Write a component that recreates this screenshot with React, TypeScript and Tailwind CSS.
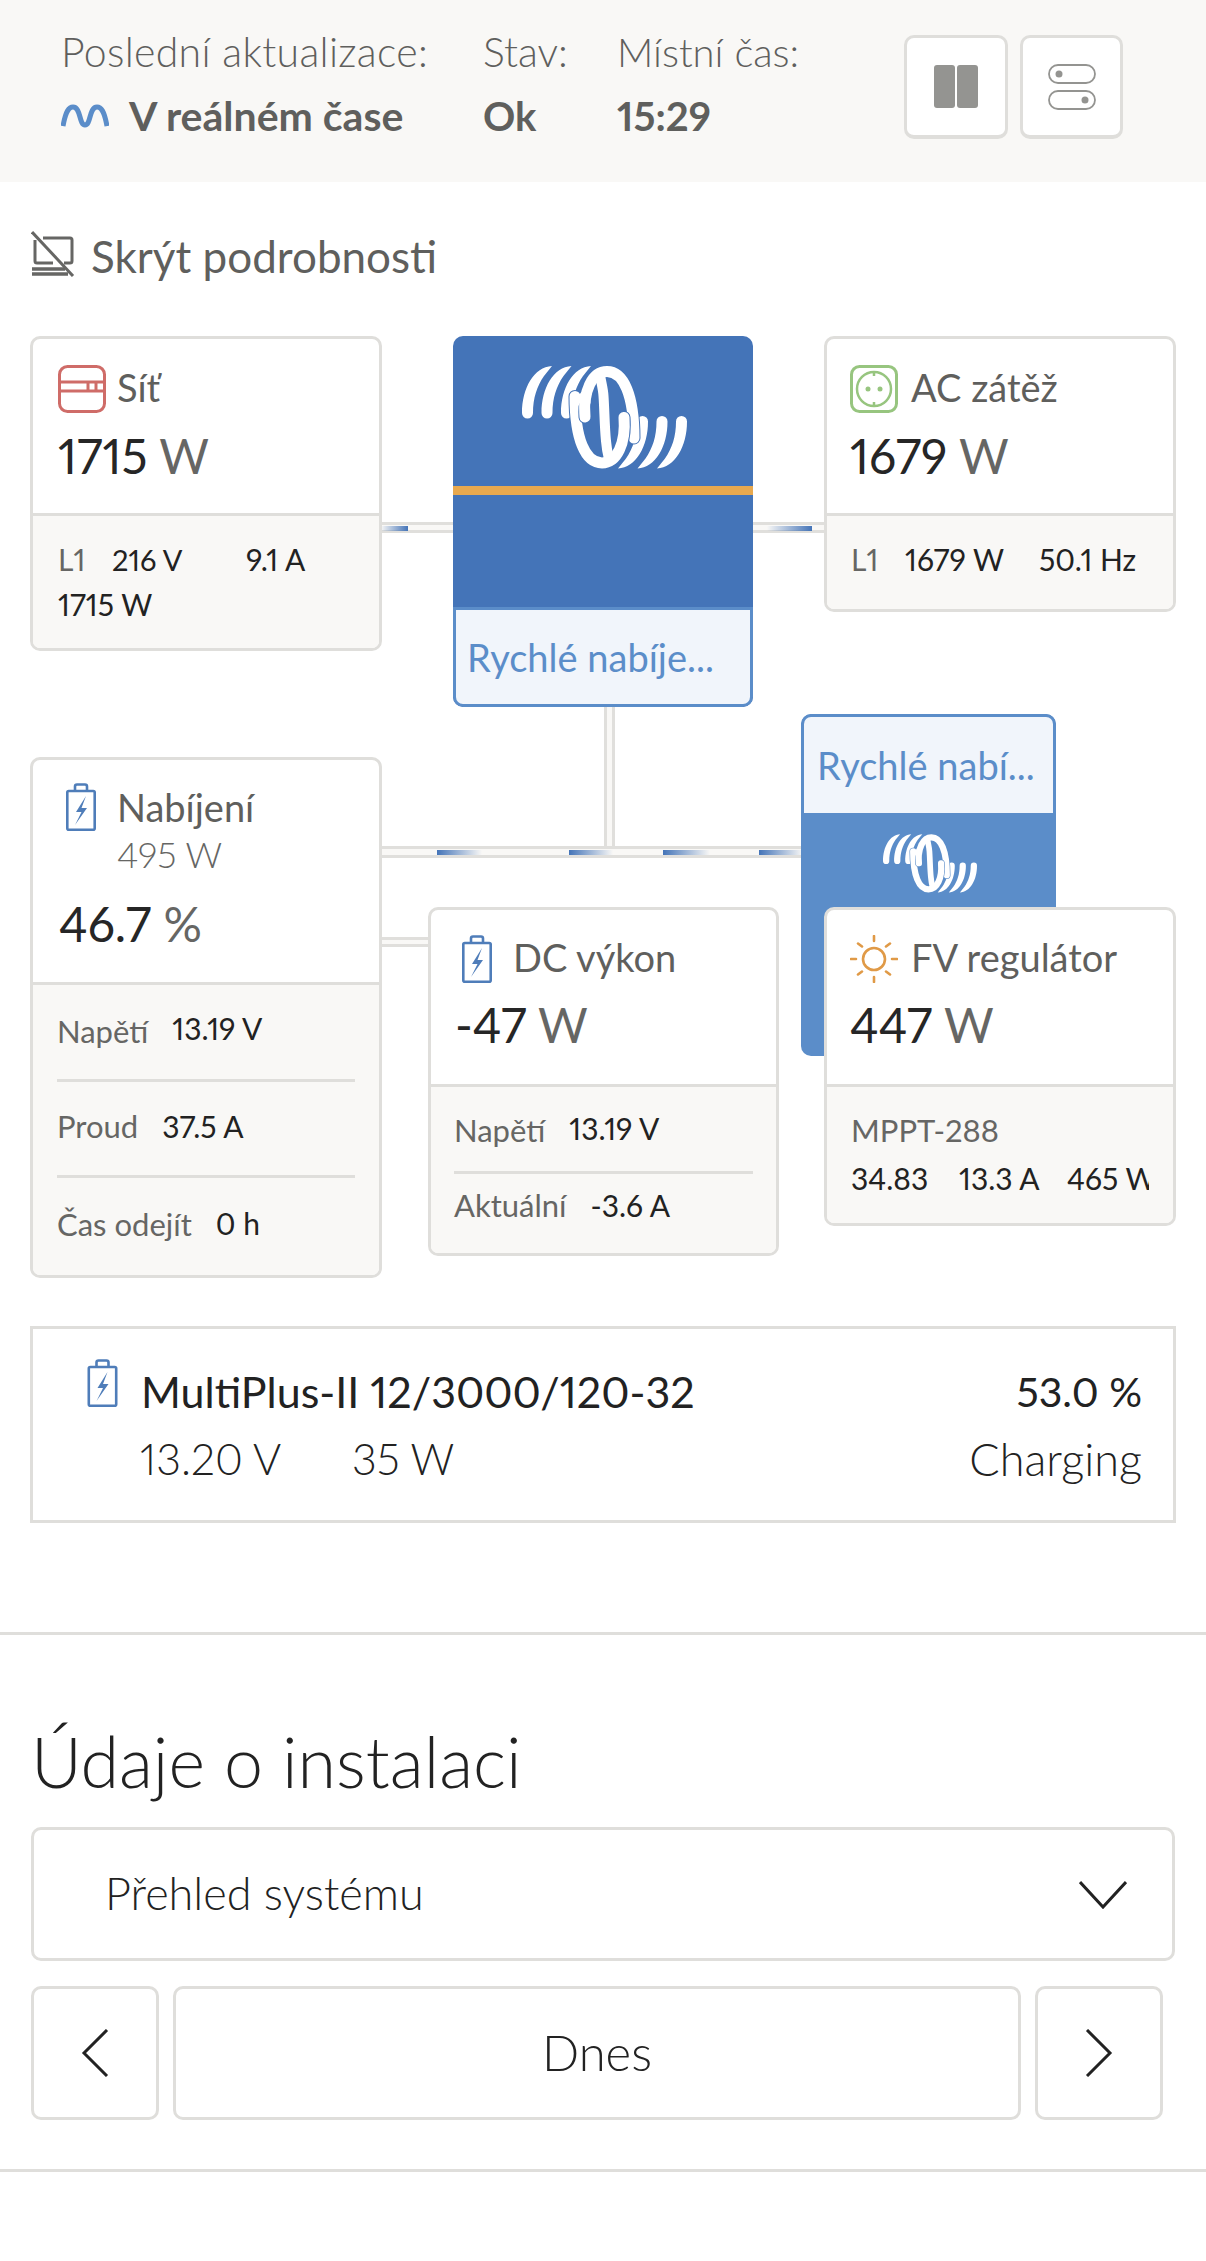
import type { ReactNode } from 'react';

const SANS = "font-['Lato','Noto_Sans',sans-serif]";
const LOOP = 'M63 51C61 25 70 5.500 85 5.500 102 5.500 112 30 112 72';

function Logo({ bg, className }: { bg: string; className: string }) {
  const crescent = (dx: number) => (
    <path
      key={dx}
      transform={`translate(${dx} 0)`}
      d="M0 47C0 22 12 1 30 0L22 10C15 20 11 32 11 47a5.500 5.500 0 0 1-11 0Z"
      fill="white"
    />
  );
  return (
    <svg viewBox="0 0 165 103" className={className}>
      {[0, 19.5, 39].map(crescent)}
      <g transform="rotate(180 82.500 51.200)">{[0, 19.5, 39].map(crescent)}</g>
      <g fill="none" strokeLinecap="round">
        <path d={LOOP} stroke={bg} strokeWidth="13" />
        <path d={LOOP} stroke="white" strokeWidth="11" />
        <g transform="rotate(180 82.500 51.200)">
          <path d={LOOP} stroke={bg} strokeWidth="13" />
          <path d={LOOP} stroke="white" strokeWidth="11" />
        </g>
        <path d="M63 51C62.800 48 62.800 44 63 41" stroke={bg} strokeWidth="13" />
        <path d="M63 51C62.500 45 62.500 38 63 30" stroke="white" strokeWidth="11" />
        <path d="M78 9C79 16 81 22 81.500 30 82.500 44 82.500 60 84 75 84.500 81 85.500 87 87 93" stroke="white" strokeWidth="10" />
      </g>
    </svg>
  );
}

function BatteryIcon({ className }: { className: string }) {
  return (
    <svg viewBox="0 0 30 48" className={className} fill="none" stroke="#4f7db9" strokeWidth="2.600">
      <rect x="1.300" y="8" width="27.400" height="38.700" rx="1.500" />
      <path d="M9 8V3.500a2 2 0 0 1 2-2h8a2 2 0 0 1 2 2V8" />
      <path d="M20 13 10 29h5.500L9 42l12-17h-5.500z" fill="#4f7db9" stroke="none" />
    </svg>
  );
}

function GridIcon() {
  return (
    <svg viewBox="0 0 48 48" className="h-12 w-12 shrink-0" fill="none" stroke="#cf6c68" strokeWidth="3">
      <rect x="1.500" y="1.500" width="45" height="45" rx="8" />
      <path d="M2 17h44M2 26h44M30 17v9M38 17v9" />
    </svg>
  );
}

function SocketIcon() {
  return (
    <svg viewBox="0 0 48 48" className="h-12 w-12 shrink-0" fill="none" stroke="#97c57f" strokeWidth="2.500">
      <rect x="1.500" y="1.500" width="45" height="45" rx="8" strokeWidth="3" />
      <circle cx="24" cy="24" r="17" />
      <path d="M24 6v5M24 37v5" />
      <circle cx="18" cy="24" r="2.500" fill="#97c57f" stroke="none" />
      <circle cx="30" cy="24" r="2.500" fill="#97c57f" stroke="none" />
    </svg>
  );
}

function SunIcon() {
  return (
    <svg viewBox="0 0 48 48" className="h-12 w-12 shrink-0" fill="none" stroke="#e09a47" strokeWidth="2.600">
      <circle cx="24" cy="24" r="11" />
      <path
        d="M24 1v5M24 42v5M1 24h5M42 24h5M8 8.500l4 3M40 8.500l-4 3M8 39.500l4-3M40 39.500l-4-3"
        strokeLinecap="round"
      />
    </svg>
  );
}

function Wire({ className, children }: { className: string; children?: ReactNode }) {
  return <div className={`absolute border-[#e0dfdc] bg-[#f9f8f6] ${className}`}>{children}</div>;
}

function Dash({ className }: { className: string }) {
  return <div className={`absolute top-[1px] h-[5px] from-[#4474b8] to-[#4474b8]/0 ${className}`} />;
}

function Card({ className, children }: { className: string; children: ReactNode }) {
  return (
    <div className={`absolute flex flex-col overflow-hidden rounded-[10px] border-[3px] border-[#dfdedb] bg-white ${className}`}>
      {children}
    </div>
  );
}

function Big({ n, unit }: { n: string; unit: string }) {
  return (
    <div className="-mt-[4px] text-[48px] leading-[56px] text-[#262626]">
      {n} <span className="text-[#666664]">{unit}</span>
    </div>
  );
}

function Title({ children }: { children: ReactNode }) {
  return <span className="pb-[3px] text-[38px] leading-[48px] text-[#5f5f5d]">{children}</span>;
}

function Foot({ className, children }: { className: string; children: ReactNode }) {
  return <div className={`flex-1 border-t-[3px] border-[#dfdedb] bg-[#f9f8f6] text-[30px] text-[#222] ${className}`}>{children}</div>;
}

function Lbl({ children }: { children: ReactNode }) {
  return <span className="text-[#666664]">{children}</span>;
}

function RowLbl({ children }: { children: ReactNode }) {
  return <span className="text-[31px] text-[#666664]">{children}</span>;
}

function Chevron({ d, className }: { d: string; className: string }) {
  return (
    <svg viewBox="0 0 48 48" className={className} fill="none" stroke="#222" strokeWidth="3">
      <path d={d} />
    </svg>
  );
}

export default function App() {
  return (
    <div className={`min-h-[2261px] w-[1206px] overflow-hidden bg-white proportional-nums ${SANS}`}>
      {/* top status bar */}
      <div className="flex h-[182px] items-start bg-[#f9f8f6] pl-[61px] pt-[29px]">
        <div className="w-[422px]">
          <div className="text-[41px] font-light leading-[46px] tracking-[0.3px] text-[#5f5f5d]">Poslední aktualizace:</div>
          <div className="mt-[18px] flex items-center gap-[20px] text-[41px] font-bold leading-[46px] text-[#5f5f5d]">
            <svg viewBox="0 0 48 24" className="h-[24px] w-[48px] shrink-0" fill="none" stroke="#5b8dc9" strokeWidth="5">
              <path d="M2 22C5 6 8 3 12 3 20 3 18 21 24 21 30 21 28 3 36 3 40 3 43 6 46 22" />
            </svg>
            V reálném čase
          </div>
        </div>
        <div className="w-[134px]">
          <div className="text-[41px] font-light leading-[46px] text-[#5f5f5d]">Stav:</div>
          <div className="mt-[18px] text-[40px] font-bold leading-[46px] text-[#5f5f5d]">Ok</div>
        </div>
        <div className="w-[287px]">
          <div className="text-[40px] font-light leading-[46px] text-[#5f5f5d]">Místní čas:</div>
          <div className="mt-[18px] text-[40px] font-bold leading-[46px] text-[#5f5f5d]">15:29</div>
        </div>
        <div className="mt-[6px] flex gap-[12px]">
          <button className="flex h-[104px] w-[104px] items-center justify-center rounded-[10px] border-[3px] border-b-[4px] border-[#dfdedb] bg-white">
            <span className="flex gap-[2px]">
              <span className="h-[43px] w-[21px] rounded-[3px] bg-[#949491]" />
              <span className="h-[43px] w-[21px] rounded-[3px] bg-[#949491]" />
            </span>
          </button>
          <button className="flex h-[104px] w-[103px] items-center justify-center rounded-[10px] border-[3px] border-b-[4px] border-[#dfdedb] bg-white">
            <svg viewBox="0 0 48 46" className="h-[46px] w-[48px]" fill="none" stroke="#949491" strokeWidth="1.800">
              <rect x="1" y="1" width="46" height="18" rx="9" />
              <rect x="1" y="27" width="46" height="18" rx="9" />
              <circle cx="11" cy="10" r="3.500" fill="#949491" stroke="none" />
              <circle cx="37" cy="36" r="3.500" fill="#949491" stroke="none" />
            </svg>
          </button>
        </div>
      </div>

      {/* details toggle */}
      <div className="flex h-[154px] items-start gap-[16px] pl-[31px] pt-[49px]">
        <svg viewBox="0 0 44 46" className="h-[46px] w-[44px] shrink-0" fill="none" stroke="#666664" strokeWidth="3">
          <path d="M12 7h27a2 2 0 0 1 2 2v21a2 2 0 0 1-2 2h-6" />
          <path d="M4 9v21a2 2 0 0 0 2 2h16" />
          <path d="M1 38h33M1 43h36" strokeWidth="3.500" />
          <path d="M1 1l41 44" />
        </svg>
        <span className="text-[44px] leading-[50px] text-[#5f5f5d]">Skrýt podrobnosti</span>
      </div>

      {/* system diagram */}
      <div className="relative h-[990px] w-[1206px]">
        <Wire className="left-[381px] top-[186px] h-[11px] w-[72px] border-y-[3px]">
          <Dash className="left-0 w-[27px] bg-gradient-to-l" />
        </Wire>
        <Wire className="left-[753px] top-[186px] h-[11px] w-[71px] border-y-[3px]">
          <Dash className="left-[14px] w-[45px] bg-gradient-to-l" />
        </Wire>
        <Wire className="left-[604px] top-[371px] h-[140px] w-[11px] border-x-[3px]" />
        <Wire className="left-[381px] top-[510px] h-[12px] w-[422px] border-y-[3px]">
          <Dash className="left-[56px] top-[1.500px] w-[45px] bg-gradient-to-r" />
          <Dash className="left-[188px] top-[1.500px] w-[44px] bg-gradient-to-r" />
          <Dash className="left-[282px] top-[1.500px] w-[47px] bg-gradient-to-r" />
          <Dash className="left-[378px] top-[1.500px] w-[44px] bg-gradient-to-r" />
        </Wire>
        <Wire className="left-[381px] top-[601px] h-[10px] w-[48px] border-y-[3px]" />

        <Card className="left-[30px] top-0 h-[315px] w-[352px]">
          <div className="h-[174px] shrink-0 pl-[25px] pt-[24px]">
            <div className="flex items-center gap-[11px]">
              <GridIcon />
              <Title>Síť</Title>
            </div>
            <div className="mt-[18px]"><Big n="1715" unit="W" /></div>
          </div>
          <Foot className="pl-[25px] pt-[21px] leading-[45px]">
            <div className="flex">
              <span className="w-[54px]"><Lbl>L1</Lbl></span>
              <span className="w-[134px] text-[29px]">216 V</span>
              <span>9.1 A</span>
            </div>
            <div>1715 W</div>
          </Foot>
        </Card>

        <div className="absolute left-[453px] top-0 flex h-[371px] w-[300px] flex-col overflow-hidden rounded-[10px] bg-[#4474b8]">
          <div className="flex h-[150px] shrink-0 justify-center pl-[2px] pt-[30px]">
            <Logo bg="#4474b8" className="h-[103px] w-[165px]" />
          </div>
          <div className="h-[9px] shrink-0 bg-[#e8a94f]" />
          <div className="h-[112px] shrink-0" />
          <div className="flex flex-1 items-center rounded-b-[10px] border-[3px] border-[#5b8dc9] bg-[#f1f5fb] pl-[11px] text-[38px] text-[#5b8dc9]">
            Rychlé nabíje...
          </div>
        </div>

        <Card className="left-[824px] top-0 h-[276px] w-[352px]">
          <div className="h-[174px] shrink-0 pl-[23px] pt-[24px]">
            <div className="flex items-center gap-[13px]">
              <SocketIcon />
              <Title>AC zátěž</Title>
            </div>
            <div className="mt-[18px]"><Big n="1679" unit="W" /></div>
          </div>
          <Foot className="pl-[24px] pt-[21px] leading-[45px]">
            <div className="flex">
              <span className="w-[54px]"><Lbl>L1</Lbl></span>
              <span className="w-[134px]">1679 W</span>
              <span>50.1 Hz</span>
            </div>
          </Foot>
        </Card>

        <Card className="left-[30px] top-[421px] h-[521px] w-[352px]">
          <div className="h-[222px] shrink-0 pl-[26px] pt-[23px]">
            <div className="flex gap-[21px]">
              <BatteryIcon className="ml-[7px] h-[48px] w-[30px] shrink-0" />
              <div className="flex flex-col">
                <Title>Nabíjení</Title>
                <span className="-mt-[3px] text-[36px] font-light leading-[46px] text-[#666664]">495 W</span>
              </div>
            </div>
            <div className="mt-[23px]"><Big n="46.7" unit="%" /></div>
          </div>
          <Foot className="px-[24px]">
            <div className="flex h-[97px] items-center gap-[24px] border-b-[3px] border-[#dfdedb] pb-[1px]"><RowLbl>Napětí</RowLbl><span className="-mt-[6px]">13.19 V</span></div>
            <div className="flex h-[96px] items-center gap-[24px] border-b-[3px] border-[#dfdedb] pb-[4px]"><RowLbl>Proud</RowLbl><span>37.5 A</span></div>
            <div className="flex h-[96px] items-center gap-[24px] pb-[3px]"><RowLbl>Čas odejít</RowLbl><span className="-mt-[2px]">0 h</span></div>
          </Foot>
        </Card>

        <Card className="left-[428px] top-[571px] h-[349px] w-[351px]">
          <div className="h-[174px] shrink-0 pl-[24px] pt-[23px]">
            <div className="flex items-center gap-[21px]">
              <BatteryIcon className="ml-[7px] h-[48px] w-[30px] shrink-0" />
              <Title>DC výkon</Title>
            </div>
            <div className="mt-[17px]"><Big n="-47" unit="W" /></div>
          </div>
          <Foot className="px-[23px]">
            <div className="flex h-[87px] items-center gap-[24px] border-b-[3px] border-[#dfdedb] pt-[2px]"><RowLbl>Napětí</RowLbl><span className="-mt-[3px]">13.19 V</span></div>
            <div className="flex h-[70px] items-center gap-[24px] pb-[7px]"><RowLbl>Aktuální</RowLbl><span>-3.6 A</span></div>
          </Foot>
        </Card>

        <div className="absolute left-[801px] top-[378px] flex h-[342px] w-[255px] flex-col overflow-hidden rounded-[10px] bg-[#5b8dc9]">
          <div className="flex h-[99px] shrink-0 items-center rounded-t-[10px] border-[3px] border-b-0 border-[#5b8dc9] bg-[#f1f5fb] pl-[13px] text-[38px] text-[#5b8dc9]">
            Rychlé nabí...
          </div>
          <div className="flex justify-center pl-[2px] pt-[21px]">
            <Logo bg="#5b8dc9" className="h-[59px] w-[94px]" />
          </div>
        </div>

        <Card className="left-[824px] top-[571px] h-[319px] w-[352px]">
          <div className="h-[174px] shrink-0 pl-[23px] pt-[23px]">
            <div className="flex items-center gap-[13px]">
              <SunIcon />
              <Title>FV regulátor</Title>
            </div>
            <div className="mt-[17px]"><Big n="447" unit="W" /></div>
          </div>
          <Foot className="pl-[24px] pt-[19px] text-[29px] leading-[48px]">
            <div className="text-[31px]"><Lbl>MPPT-288</Lbl></div>
            <div className="flex w-[298px] overflow-hidden whitespace-nowrap">
              <span className="w-[108px] shrink-0">34.83</span>
              <span className="w-[108px] shrink-0">13.3 A</span>
              <span>465 W</span>
            </div>
          </Foot>
        </Card>
      </div>

      {/* battery monitor */}
      <div className="mx-[30px] h-[197px] border-[3px] border-[#dfdedb] pl-[54px] pr-[31px] pt-[30px]">
        <div className="flex items-start">
          <BatteryIcon className="h-[48px] w-[31px] shrink-0" />
          <span className="ml-[23px] mt-[8px] text-[43px] leading-[50px] text-[#222]">MultiPlus-II 12/3000/120-32</span>
          <span className="ml-auto mt-[8px] text-[41px] leading-[50px] text-[#222]">53.0 %</span>
        </div>
        <div className="mt-[17px] flex pl-[53px] text-[43px] font-light leading-[50px] text-[#222]">
          <span className="w-[212px]">13.20 V</span>
          <span>35 W</span>
          <span className="ml-auto text-[45px]">Charging</span>
        </div>
      </div>

      <div className="mt-[109px] h-[3px] bg-[#dfdedb]" />

      {/* installation data */}
      <h2 className="ml-[31px] mt-[91px] text-[70px] font-light leading-[70px] text-[#222]">Údaje o instalaci</h2>
      <div className="mx-[31px] mt-[31px] flex h-[134px] items-center justify-between rounded-[10px] border-[3px] border-[#dfdedb] pl-[71px] pr-[45px] text-[45px] font-light text-[#222]">
        Přehled systému
        <Chevron d="M1 12l23 25 23-25" className="h-[48px] w-[48px]" />
      </div>
      <div className="ml-[31px] mt-[25px] flex gap-[14px]">
        <button className="flex h-[134px] w-[128px] items-center justify-center rounded-[10px] border-[3px] border-[#dfdedb]">
          <Chevron d="M36 1 13 24l23 23" className="h-[48px] w-[48px]" />
        </button>
        <button className="h-[134px] w-[848px] rounded-[10px] border-[3px] border-[#dfdedb] text-[49px] font-light text-[#222]">Dnes</button>
        <button className="flex h-[134px] w-[128px] items-center justify-center rounded-[10px] border-[3px] border-[#dfdedb]">
          <Chevron d="M12 1l23 23-23 23" className="h-[48px] w-[48px]" />
        </button>
      </div>
      <div className="mt-[49px] h-[3px] bg-[#dfdedb]" />
    </div>
  );
}
